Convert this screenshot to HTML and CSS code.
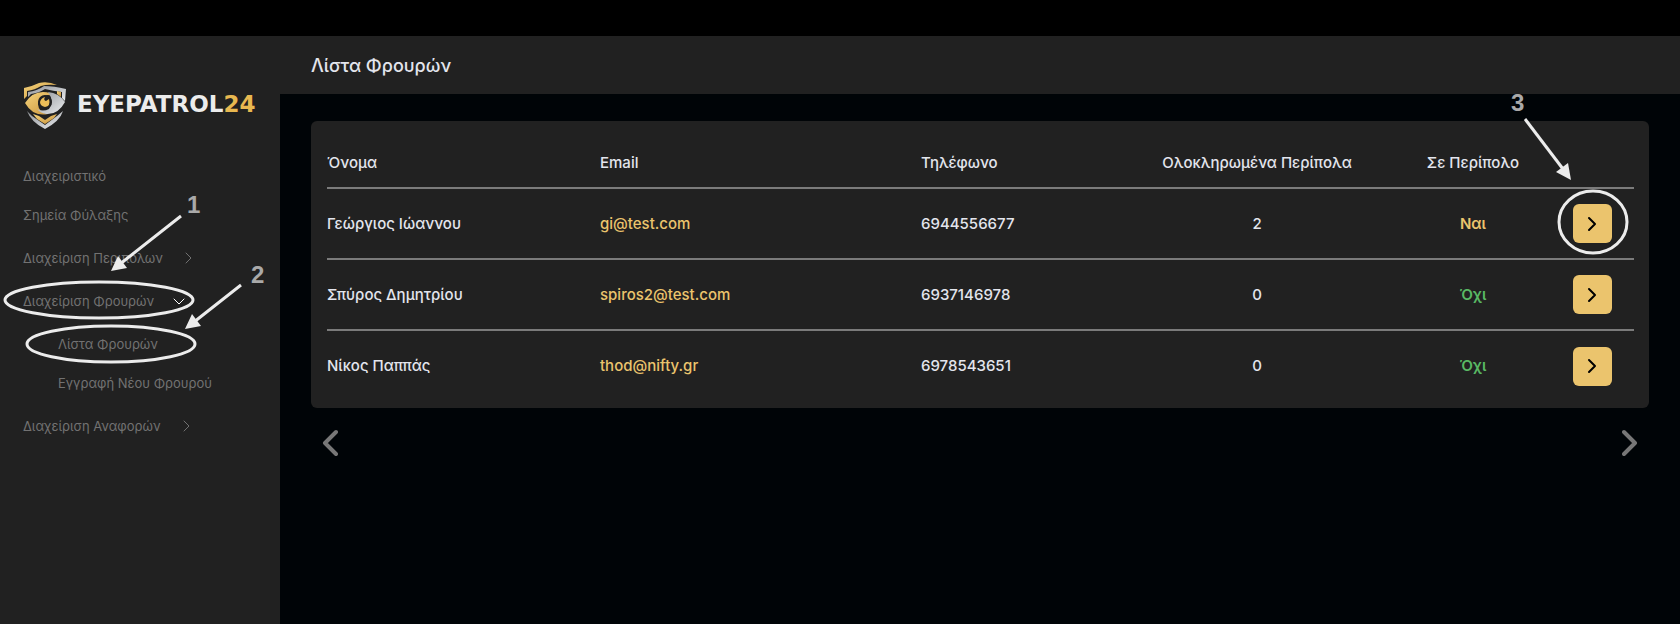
FILE: index.html
```html
<!DOCTYPE html>
<html lang="el">
<head>
  <meta charset="UTF-8" />
  <meta name="viewport" content="width=device-width, initial-scale=1.0"/>
  <title>Λίστα Φρουρών - EyePatrol24</title>
  <link rel="stylesheet" href="styles.css">
</head>
<body>
  <div class="app">
    <aside class="sidebar">
      <a class="logo" href="#">
        <svg width="44" height="48" viewBox="0 0 44 48" aria-hidden="true">
          <defs>
            <linearGradient id="gold" x1="0" y1="0" x2="1" y2="1">
              <stop offset="0" stop-color="#f6d47c"/>
              <stop offset="1" stop-color="#c8923a"/>
            </linearGradient>
            <linearGradient id="silver" x1="0" y1="0" x2="1" y2="1">
              <stop offset="0" stop-color="#8f9297"/>
              <stop offset="1" stop-color="#eceef0"/>
            </linearGradient>
          </defs>
          <!-- shield -->
          <path d="M1 6 Q10 4 16 1 Q25 -1 34 3 Q24 2 18 4 Q12 8 4 9 L4 14 L1 17Z" fill="url(#gold)"/>
          <path d="M5 10 Q14 9 21 4 Q31 4 43 7 L42 19 L39 16 L39 10 Q30 9 22 7 Q16 11 8 12 L5 15Z" fill="url(#silver)"/>
          <path d="M34 9 L38 10 L38 15 L34 12Z" fill="url(#gold)"/>
          <path d="M4 29 L9 34 L22 43 L34 34 L40 29 Q37 39 22 47 Q8 40 4 29Z" fill="url(#silver)"/>
          <path d="M10 32 L16 34 L22 38 L28 34 L34 32 L31 36 L22 42 L14 37Z" fill="url(#gold)"/>
          <!-- eye -->
          <path d="M2 21 Q9 10 20 10 Q28 10 32 15 Q25 11 18 15 Q12 22 18 29 Q21 32 25 32 Q10 35 2 21Z" fill="url(#gold)"/>
          <path d="M25 10 Q36 11 42 20 Q35 33 23 32 Q17 31 14 27 Q20 30 26 27 Q32 20 25 10Z" fill="url(#silver)"/>
          <circle cx="22" cy="20" r="7" fill="#212121"/>
          <path d="M22 15 Q20 18 23 19 L26 17 Q28 24 22 25 Q17 24 17 20 Q18 16 22 15Z" fill="#edbe59"/>
        </svg>
        <span class="logo-text">EYEPATROL<span class="gold">24</span></span>
      </a>

      <nav>
        <ul class="menu">
          <li><a href="#">Διαχειριστικό</a></li>
          <li><a href="#">Σημεία Φύλαξης</a></li>
          <li class="group">
            <button type="button" aria-expanded="false">Διαχείριση Περιπόλων
              <svg width="12" height="12" viewBox="0 0 12 12"><path d="M4 1l5 5-5 5"/></svg>
            </button>
          </li>
          <li class="group open">
            <button type="button" aria-expanded="true">Διαχείριση Φρουρών
              <svg width="12" height="12" viewBox="0 0 12 12"><path d="M1 4l5 5 5-5"/></svg>
            </button>
            <ul class="submenu">
              <li><a href="#">Λίστα Φρουρών</a></li>
              <li><a href="#">Εγγραφή Νέου Φρουρού</a></li>
            </ul>
          </li>
          <li class="group">
            <button type="button" aria-expanded="false">Διαχείριση Αναφορών
              <svg width="12" height="12" viewBox="0 0 12 12"><path d="M4 1l5 5-5 5"/></svg>
            </button>
          </li>
        </ul>
      </nav>
    </aside>

    <div class="content">
      <header>
        <h1>Λίστα Φρουρών</h1>
      </header>

      <main>
        <div class="card">
          <table>
            <colgroup>
              <col class="col-name">
              <col class="col-email">
              <col class="col-phone">
              <col class="col-done">
              <col class="col-status">
              <col class="col-action">
            </colgroup>
            <thead>
              <tr>
                <th>Όνομα</th>
                <th>Email</th>
                <th>Τηλέφωνο</th>
                <th class="center">Ολοκληρωμένα Περίπολα</th>
                <th class="center">Σε Περίπολο</th>
                <th></th>
              </tr>
            </thead>
            <tbody>
              <tr>
                <td>Γεώργιος Ιώαννου</td>
                <td><a href="mailto:gi@test.com">gi@test.com</a></td>
                <td>6944556677</td>
                <td class="center">2</td>
                <td class="center status-yes">Ναι</td>
                <td class="center">
                  <button type="button" class="open-btn" aria-label="Γεώργιος Ιώαννου"><svg width="16" height="16" viewBox="0 0 16 16"><path d="M5 2l6 6-6 6"/></svg></button>
                </td>
              </tr>
              <tr>
                <td>Σπύρος Δημητρίου</td>
                <td><a href="mailto:spiros2@test.com">spiros2@test.com</a></td>
                <td>6937146978</td>
                <td class="center">0</td>
                <td class="center status-no">Όχι</td>
                <td class="center">
                  <button type="button" class="open-btn" aria-label="Σπύρος Δημητρίου"><svg width="16" height="16" viewBox="0 0 16 16"><path d="M5 2l6 6-6 6"/></svg></button>
                </td>
              </tr>
              <tr>
                <td>Νίκος Παππάς</td>
                <td><a href="mailto:thod@nifty.gr">thod@nifty.gr</a></td>
                <td>6978543651</td>
                <td class="center">0</td>
                <td class="center status-no">Όχι</td>
                <td class="center">
                  <button type="button" class="open-btn" aria-label="Νίκος Παππάς"><svg width="16" height="16" viewBox="0 0 16 16"><path d="M5 2l6 6-6 6"/></svg></button>
                </td>
              </tr>
            </tbody>
          </table>
        </div>

        <div class="pager">
          <button type="button" aria-label="Προηγούμενη"><svg width="16" height="28" viewBox="0 0 16 28"><path d="M14 3L3 14l11 11"/></svg></button>
          <button type="button" aria-label="Επόμενη"><svg width="16" height="28" viewBox="0 0 16 28"><path d="M2 3l11 11L2 25"/></svg></button>
        </div>
      </main>
    </div>
  </div>

  <!-- guide marks: steps 1 and 2 over the menu, step 3 over the table -->
  <svg class="marks marks-menu" width="280" height="200" viewBox="0 180 280 200">
    <ellipse cx="99" cy="300" rx="94" ry="18"/>
    <ellipse cx="111" cy="344" rx="84" ry="18"/>
    <path d="M181 216L120 264M241 285L194 322"/>
    <polygon points="111,271 118,256 127,268"/>
    <polygon points="185,329 192,314 201,326"/>
    <text x="187" y="213">1</text>
    <text x="251" y="283">2</text>
  </svg>
  <svg class="marks marks-table" width="180" height="180" viewBox="1500 80 180 180">
    <ellipse cx="1593" cy="222" rx="34" ry="31"/>
    <path d="M1525 119L1563 169"/>
    <polygon points="1571,180 1556,172 1568,163"/>
    <text x="1511" y="111">3</text>
  </svg>
</body>
</html>
```
FILE: styles.css
```css
:root {
  --bg: #000407;
  --panel: #212121;
  --text: #e3e5ed;
  --muted: #727272;
  --gold: #ebc46d;
  --green: #59b864;
  --line: #7b7b7b;
}

* {
  box-sizing: border-box;
}

body {
  margin: 0;
  position: relative;
  font-family: Inter, "Open Sans", sans-serif;
  font-size: 15px;
  font-weight: 500;
  line-height: 24px;
  background: #000;
  color: var(--text);
}

button {
  font: inherit;
  color: inherit;
  background: none;
  border: none;
  padding: 0;
  cursor: pointer;
}

a {
  color: inherit;
  text-decoration: none;
}

svg path {
  stroke-linecap: round;
  stroke-linejoin: round;
}

.app {
  display: flex;
  min-height: 100vh;
  padding-top: 36px;
}

/* Sidebar */
.sidebar {
  flex: 0 0 280px;
  background: var(--panel);
  padding: 46px 0 24px 23px;
}

.logo {
  display: flex;
  align-items: center;
  gap: 10px;
}

.logo svg {
  flex: none;
}

.logo-text {
  font-family: "DejaVu Sans", sans-serif;
  font-size: 23px;
  font-weight: 700;
  line-height: 24px;
  color: #ececec;
  padding-bottom: 4px;
}

.gold {
  color: #e8b850;
}

.menu,
.submenu {
  list-style: none;
  margin: 0;
  padding: 0;
}

.menu {
  margin-top: 34px;
  font-size: 13px;
  font-weight: 400;
  color: var(--muted);
}

.menu a,
.menu button {
  display: flex;
  align-items: center;
  height: 24px;
  margin-bottom: 15px;
  white-space: nowrap;
}

.menu button {
  gap: 19px;
}

.menu svg {
  fill: none;
  stroke: currentColor;
}

.group,
.submenu {
  padding-top: 4px;
}

.open > button svg {
  stroke: #fff;
}

.submenu {
  padding-left: 35px;
}

/* Content */
.content {
  flex: 1;
  min-width: 0;
  background: var(--bg);
}

header {
  background: var(--panel);
  padding: 16px 31px 14px;
}

h1 {
  margin: 0;
  font-size: 18px;
  font-weight: 500;
  line-height: 28px;
}

main {
  padding: 27px 31px;
}

.card {
  background: var(--panel);
  border-radius: 6px;
  padding: 16px 16px 7px;
}

table {
  width: 100%;
  table-layout: fixed;
  border-collapse: collapse;
}

.col-name { width: 273px; }
.col-email { width: 321px; }
.col-phone { width: 197px; }
.col-done { width: 278px; }
.col-status { width: 154px; }
.col-action { width: 84px; }

th,
td {
  padding: 0;
  text-align: left;
  font-weight: 500;
  white-space: nowrap;
}

th {
  height: 51px;
  padding-top: 2px;
}

td {
  height: 71px;
}

thead tr,
tbody tr:not(:last-child) {
  border-bottom: 2px solid var(--line);
}

td a,
.status-yes {
  color: var(--gold);
}

.status-yes,
.status-no {
  font-weight: 600;
}

.status-no {
  color: var(--green);
}

.center {
  text-align: center;
}

.open-btn {
  display: inline-flex;
  align-items: center;
  justify-content: center;
  width: 39px;
  height: 39px;
  border-radius: 6px;
  background: var(--gold);
  vertical-align: middle;
}

.open-btn svg {
  fill: none;
  stroke: #000;
  stroke-width: 2;
}

.pager {
  display: flex;
  justify-content: space-between;
  padding: 21px 11px;
}

.pager button {
  display: flex;
}

.pager svg {
  fill: none;
  stroke: #777;
  stroke-width: 4;
}

/* Guide marks */
.marks {
  position: absolute;
  pointer-events: none;
}

.marks-menu {
  top: 180px;
  left: 0;
}

.marks-table {
  top: 80px;
  right: 0;
}

.marks ellipse,
.marks path {
  fill: none;
  stroke: #ececec;
  stroke-width: 3;
}

.marks path {
  stroke-linecap: butt;
}

.marks polygon {
  fill: #ececec;
}

.marks text {
  fill: #a9a9a9;
  font-family: "Liberation Sans", sans-serif;
  font-size: 24px;
  font-weight: 700;
}
```
